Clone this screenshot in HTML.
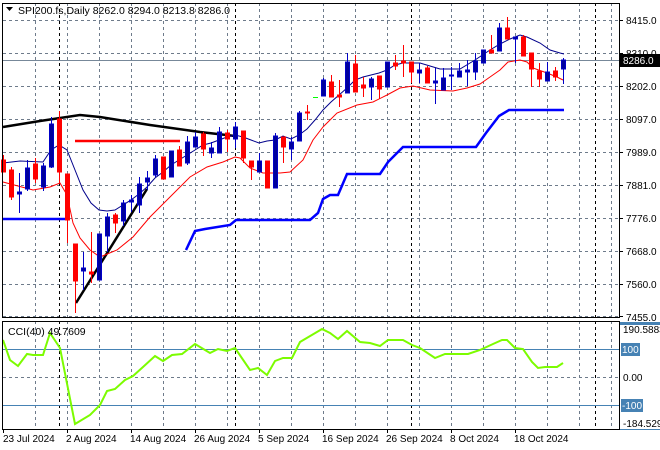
<!DOCTYPE html>
<html><head><meta charset="utf-8"><style>
html,body{margin:0;padding:0;background:#fff;}
svg{display:block;font-family:"Liberation Sans",sans-serif;}
</style></head><body>
<svg width="660" height="450" viewBox="0 0 660 450" xmlns="http://www.w3.org/2000/svg">
<rect width="660" height="450" fill="#fff"/>
<!-- grid main -->
<g stroke="#6e7b8b" stroke-width="1" stroke-dasharray="3,3" fill="none">
<path d="M3 20.5H619M3 53.5H619M3 86.5H619M3 119.5H619M3 152.5H619M3 185.5H619M3 218.5H619M3 251.5H619M3 284.5H619M3 316.5H619M3 377.5H619"/>
<path d="M35.5 3V429M67.5 3V429M99.5 3V429M131.5 3V429M163.5 3V429M195.5 3V429M227.5 3V429M259.5 3V429M291.5 3V429M323.5 3V429M355.5 3V429M387.5 3V429M419.5 3V429M451.5 3V429M483.5 3V429M515.5 3V429M547.5 3V429M579.5 3V429M611.5 3V429"/>
</g>
<g stroke="#000" stroke-width="1" stroke-dasharray="3,3" fill="none">
<path d="M59.5 3V429M235.5 3V429M411.5 3V429M595.5 3V429"/>
</g>
<!-- current price line -->
<line x1="3" y1="60.5" x2="619" y2="60.5" stroke="#778899"/>
<!-- blue step line -->
<polyline fill="none" stroke="#0000ff" stroke-width="2.5" points="3,219 66,219"/>
<polyline fill="none" stroke="#0000ff" stroke-width="2.5" points="186,250 195,231 205,229 230,225 236,220 310,220 318,213 323,199 330,195 338,195 347,174 380,174 388,162 403,147 476,147 486,133 499,116 509,110 564,110"/>
<!-- black thick MA -->
<polyline fill="none" stroke="#000" stroke-width="2.5" points="3,127 40,121 80,115 100,117 150,125 200,132 235,136"/>
<line x1="76" y1="303" x2="147" y2="189" stroke="#000" stroke-width="2.5"/>
<line x1="75" y1="141" x2="180" y2="141" stroke="#ff0000" stroke-width="2.5"/>
<!-- navy MA -->
<polyline fill="none" stroke="#00008b" stroke-width="1" points="3,163 20,161 43,162 51,150 59,145 67,150 75,170 83,190 91,203 99,210 107,211 115,210 123,205 131,200 139,194 147,187 155,178 163,172 171,165 179,160 187,155 195,150 203,145 211,143 219,140 227,137 235,135 243,137 251,140 259,143 267,141 275,140 283,136 291,139 299,135 307,129 315,120 323,110 331,102 339,95 347,88 355,80 363,77 371,75 379,73 387,70 395,65 403,63 420,63 430,66 440,69 460,69 475,60 490,50 500,44 510,39 520,35 527,37 540,43 550,50 560,53 564,54"/>
<!-- red MA -->
<polyline fill="none" stroke="#ff0000" stroke-width="1" points="3,182 33,190 50,187 60,183 67,195 73,223 80,238 90,250 100,257 117,250 133,237 150,217 167,200 190,177 207,167 223,162 235,157 240,158 250,168 263,173 280,173 290,172 303,160 313,140 323,127 337,113 357,105 373,102 387,95 400,88 413,86 430,90 453,91 467,88 480,84 490,77 500,70 508,62 520,60 527,62 533,68 547,73 557,77 563,80"/>
<line x1="313" y1="97.5" x2="318" y2="97.5" stroke="#00ff00"/>
<!-- red candles -->
<g fill="#ff0000" stroke="#ff0000">
<line x1="3.5" y1="155" x2="3.5" y2="172"/><rect x="1.5" y="160" width="4" height="12"/>
<line x1="11.5" y1="167" x2="11.5" y2="200"/><rect x="9.5" y="170" width="4" height="27"/>
<line x1="35.5" y1="158" x2="35.5" y2="183"/><rect x="33.5" y="164" width="4" height="15"/>
<line x1="59.5" y1="111" x2="59.5" y2="183"/><rect x="57.5" y="119" width="4" height="53"/>
<line x1="67.5" y1="174" x2="67.5" y2="243"/><rect x="65.5" y="174" width="4" height="46"/>
<line x1="75.5" y1="244" x2="75.5" y2="313"/><rect x="73.5" y="244" width="4" height="37"/>
<line x1="91.5" y1="232" x2="91.5" y2="283"/><rect x="89.5" y="272" width="4" height="2"/>
<line x1="115.5" y1="213" x2="115.5" y2="233"/><rect x="113.5" y="215" width="4" height="8"/>
<line x1="163.5" y1="157" x2="163.5" y2="179"/><rect x="161.5" y="157" width="4" height="22"/>
<line x1="179.5" y1="146" x2="179.5" y2="166"/><rect x="177.5" y="150" width="4" height="16"/>
<line x1="203.5" y1="132" x2="203.5" y2="156"/><rect x="201.5" y="134" width="4" height="15"/>
<line x1="227.5" y1="130" x2="227.5" y2="152"/><rect x="225.5" y="133" width="4" height="6"/>
<line x1="243.5" y1="131" x2="243.5" y2="163"/><rect x="241.5" y="131" width="4" height="27"/>
<line x1="251.5" y1="161" x2="251.5" y2="180"/><rect x="249.5" y="161" width="4" height="6"/>
<line x1="267.5" y1="161" x2="267.5" y2="188"/><rect x="265.5" y="161" width="4" height="27"/>
<line x1="283.5" y1="137" x2="283.5" y2="163"/><rect x="281.5" y="137" width="4" height="10"/>
<line x1="307.5" y1="105" x2="307.5" y2="120"/><rect x="305.5" y="112" width="4" height="1"/>
<line x1="331.5" y1="75" x2="331.5" y2="97"/><rect x="329.5" y="82" width="4" height="15"/>
<line x1="339.5" y1="80" x2="339.5" y2="107"/><rect x="337.5" y="95" width="4" height="2"/>
<line x1="355.5" y1="55" x2="355.5" y2="92"/><rect x="353.5" y="64" width="4" height="28"/>
<line x1="363.5" y1="77" x2="363.5" y2="97"/><rect x="361.5" y="85" width="4" height="3"/>
<line x1="379.5" y1="76" x2="379.5" y2="99"/><rect x="377.5" y="76" width="4" height="13"/>
<line x1="395.5" y1="55" x2="395.5" y2="70"/><rect x="393.5" y="63" width="4" height="3"/>
<line x1="403.5" y1="45" x2="403.5" y2="77"/><rect x="401.5" y="61" width="4" height="2"/>
<line x1="411.5" y1="62" x2="411.5" y2="83"/><rect x="409.5" y="62" width="4" height="10"/>
<line x1="427.5" y1="66" x2="427.5" y2="83"/><rect x="425.5" y="68" width="4" height="15"/>
<line x1="491.5" y1="35" x2="491.5" y2="53"/><rect x="489.5" y="50" width="4" height="3"/>
<line x1="507.5" y1="17" x2="507.5" y2="39"/><rect x="505.5" y="28" width="4" height="11"/>
<line x1="523.5" y1="35" x2="523.5" y2="56"/><rect x="521.5" y="37" width="4" height="19"/>
<line x1="531.5" y1="53" x2="531.5" y2="87"/><rect x="529.5" y="53" width="4" height="16"/>
<line x1="539.5" y1="63" x2="539.5" y2="87"/><rect x="537.5" y="71" width="4" height="8"/>
<line x1="555.5" y1="67" x2="555.5" y2="81"/><rect x="553.5" y="71" width="4" height="6"/>
</g>
<!-- blue candles -->
<g fill="#00009c" stroke="#0000c8">
<line x1="19.5" y1="173" x2="19.5" y2="213"/><rect x="17.5" y="192" width="4" height="2"/>
<line x1="27.5" y1="160" x2="27.5" y2="191"/><rect x="25.5" y="168" width="4" height="21"/>
<line x1="43.5" y1="163" x2="43.5" y2="191"/><rect x="41.5" y="166" width="4" height="21"/>
<line x1="51.5" y1="117" x2="51.5" y2="168"/><rect x="49.5" y="124" width="4" height="43"/>
<line x1="83.5" y1="252" x2="83.5" y2="290"/><rect x="81.5" y="268" width="4" height="3"/>
<line x1="99.5" y1="234" x2="99.5" y2="280"/><rect x="97.5" y="234" width="4" height="46"/>
<line x1="107.5" y1="213" x2="107.5" y2="252"/><rect x="105.5" y="217" width="4" height="19"/>
<line x1="123.5" y1="200" x2="123.5" y2="226"/><rect x="121.5" y="203" width="4" height="18"/>
<line x1="131.5" y1="195" x2="131.5" y2="212"/><rect x="129.5" y="200" width="4" height="2"/>
<line x1="139.5" y1="177" x2="139.5" y2="213"/><rect x="137.5" y="184" width="4" height="21"/>
<line x1="147.5" y1="171" x2="147.5" y2="190"/><rect x="145.5" y="178" width="4" height="4"/>
<line x1="155.5" y1="155" x2="155.5" y2="177"/><rect x="153.5" y="159" width="4" height="16"/>
<line x1="171.5" y1="151" x2="171.5" y2="177"/><rect x="169.5" y="151" width="4" height="26"/>
<line x1="187.5" y1="136" x2="187.5" y2="165"/><rect x="185.5" y="142" width="4" height="21"/>
<line x1="195.5" y1="132" x2="195.5" y2="147"/><rect x="193.5" y="137" width="4" height="10"/>
<line x1="211.5" y1="142" x2="211.5" y2="158"/><rect x="209.5" y="148" width="4" height="5"/>
<line x1="219.5" y1="127" x2="219.5" y2="153"/><rect x="217.5" y="132" width="4" height="21"/>
<line x1="235.5" y1="122" x2="235.5" y2="148"/><rect x="233.5" y="127" width="4" height="12"/>
<line x1="259.5" y1="153" x2="259.5" y2="172"/><rect x="257.5" y="161" width="4" height="11"/>
<line x1="275.5" y1="133" x2="275.5" y2="188"/><rect x="273.5" y="136" width="4" height="52"/>
<line x1="291.5" y1="137" x2="291.5" y2="160"/><rect x="289.5" y="142" width="4" height="7"/>
<line x1="299.5" y1="111" x2="299.5" y2="141"/><rect x="297.5" y="113" width="4" height="28"/>
<line x1="323.5" y1="78" x2="323.5" y2="96"/><rect x="321.5" y="80" width="4" height="16"/>
<line x1="347.5" y1="53" x2="347.5" y2="93"/><rect x="345.5" y="62" width="4" height="31"/>
<line x1="371.5" y1="77" x2="371.5" y2="100"/><rect x="369.5" y="79" width="4" height="8"/>
<line x1="387.5" y1="62" x2="387.5" y2="87"/><rect x="385.5" y="62" width="4" height="25"/>
<line x1="419.5" y1="63" x2="419.5" y2="83"/><rect x="417.5" y="70" width="4" height="3"/>
<line x1="435.5" y1="68" x2="435.5" y2="104"/><rect x="433.5" y="81" width="4" height="2"/>
<line x1="443.5" y1="68" x2="443.5" y2="90"/><rect x="441.5" y="78" width="4" height="12"/>
<line x1="451.5" y1="67" x2="451.5" y2="90"/><rect x="449.5" y="75" width="4" height="1"/>
<line x1="459.5" y1="63" x2="459.5" y2="77"/><rect x="457.5" y="71" width="4" height="6"/>
<line x1="467.5" y1="60" x2="467.5" y2="86"/><rect x="465.5" y="70" width="4" height="2"/>
<line x1="475.5" y1="53" x2="475.5" y2="80"/><rect x="473.5" y="61" width="4" height="11"/>
<line x1="483.5" y1="50" x2="483.5" y2="63"/><rect x="481.5" y="50" width="4" height="13"/>
<line x1="499.5" y1="23" x2="499.5" y2="51"/><rect x="497.5" y="28" width="4" height="23"/>
<line x1="515.5" y1="37" x2="515.5" y2="63"/><rect x="513.5" y="37" width="4" height="2"/>
<line x1="547.5" y1="62" x2="547.5" y2="81"/><rect x="545.5" y="72" width="4" height="9"/>
<line x1="563.5" y1="58" x2="563.5" y2="84"/><rect x="561.5" y="60" width="4" height="9"/>
</g>
<!-- CCI panel -->
<g stroke="#4682b4" stroke-width="1">
<line x1="3" y1="349.5" x2="619" y2="349.5"/>
<line x1="3" y1="405.5" x2="619" y2="405.5"/>
</g>
<polyline fill="none" stroke="#7cfc00" stroke-width="2" points="3,340 10,360 18,366 27,354 33,355 43,355 50,333 60,348 75,424 90,415 100,405 107,391 115,389 125,380 133,376 143,367 155,356 163,361 172,355 182,354 195,344 210,353 218,349 227,351 235,348 250,370 258,368 267,375 275,361 283,358 292,358 300,342 322,329 330,333 338,339 347,331 360,342 370,343 380,346 388,340 403,340 412,345 420,348 435,358 445,354 468,354 480,350 493,344 502,340 507,340 515,348 523,349 532,362 538,368 545,367 557,367 563,363"/>
<!-- frames -->
<g fill="none" stroke="#000" stroke-width="1">
<rect x="2.5" y="3.5" width="617" height="314"/>
<rect x="2.5" y="321.5" width="617" height="108"/>
</g>
<!-- header -->
<path d="M6 7H13L9.5 11Z" fill="#000"/>
<text x="18" y="14" font-size="10.5" fill="#000">SPI200.fs,Daily  8262.0 8294.0 8213.8 8286.0</text>
<text x="8" y="335" font-size="10.5" fill="#000">CCI(40) 49.7609</text>
<!-- price axis -->
<g font-size="10" fill="#000">
<text x="626" y="24">8415.0</text>
<text x="626" y="57">8310.0</text>
<text x="626" y="90">8202.0</text>
<text x="626" y="123">8097.0</text>
<text x="626" y="156">7989.0</text>
<text x="626" y="189">7881.0</text>
<text x="626" y="222">7776.0</text>
<text x="626" y="255">7668.0</text>
<text x="626" y="288">7560.0</text>
<text x="626" y="321">7455.0</text>
</g>
<g stroke="#000"><path d="M619 20.5h4M619 53.5h4M619 86.5h4M619 119.5h4M619 152.5h4M619 185.5h4M619 218.5h4M619 251.5h4M619 284.5h4M619 316.5h4"/></g>
<rect x="620" y="54" width="40" height="13" fill="#000"/>
<text x="623" y="64" font-size="10" fill="#fff">8286.0</text>
<g font-size="10">
<rect x="620" y="322" width="40" height="3" fill="#4682b4"/>
<text x="623" y="333" fill="#000">190.5883</text>
<rect x="621" y="343" width="19" height="13" fill="#4682b4"/>
<text x="622" y="353" fill="#fff">100</text>
<text x="623" y="381" fill="#000">0.00</text>
<rect x="621" y="399" width="22" height="13" fill="#4682b4"/>
<text x="622" y="409" fill="#fff">-100</text>
<text x="623" y="427" fill="#000">-184.529</text>
<rect x="620" y="429" width="40" height="1" fill="#4682b4"/>
</g>
<!-- date axis -->
<g stroke="#000"><path d="M3.5 429v4M67.5 429v4M131.5 429v4M195.5 429v4M259.5 429v4M323.5 429v4M387.5 429v4M451.5 429v4M515.5 429v4"/></g>
<g font-size="10" fill="#000">
<text x="3" y="442">23 Jul 2024</text>
<text x="66" y="442">2 Aug 2024</text>
<text x="130" y="442">14 Aug 2024</text>
<text x="194" y="442">26 Aug 2024</text>
<text x="258" y="442">5 Sep 2024</text>
<text x="322" y="442">16 Sep 2024</text>
<text x="386" y="442">26 Sep 2024</text>
<text x="450" y="442">8 Oct 2024</text>
<text x="514" y="442">18 Oct 2024</text>
</g>
</svg>
</body></html>
